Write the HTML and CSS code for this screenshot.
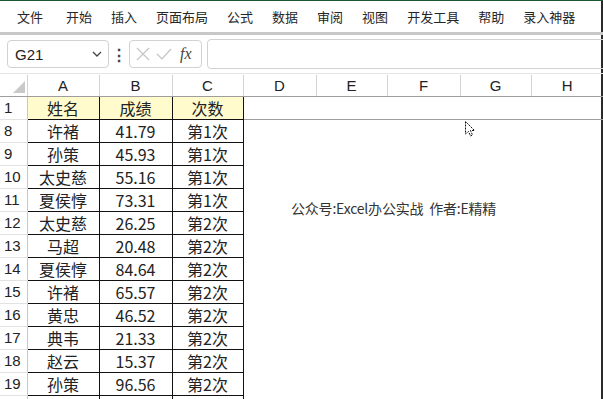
FILE: index.html
```html
<!DOCTYPE html>
<html lang="zh-CN">
<head>
    <meta charset="UTF-8">
    <title>Excel</title>
    <link rel="stylesheet" href="styles.css">
</head>
<body>
<div class="app">
    <div class="menu">
        <span class="first">文件</span>
        <span>开始</span>
        <span>插入</span>
        <span>页面布局</span>
        <span>公式</span>
        <span>数据</span>
        <span>审阅</span>
        <span>视图</span>
        <span>开发工具</span>
        <span>帮助</span>
        <span>录入神器</span>
    </div>

    <div class="formula-bar">
        <div class="name-box">
            <span>G21</span>
            <svg width="10" height="6" viewBox="0 0 10 6"><path d="M1 1 L5 5 L9 1" fill="none" stroke="#444" stroke-width="1.3"/></svg>
        </div>
        <div class="dots">⋮</div>
        <div class="fx-box">
            <svg width="14" height="14" viewBox="0 0 14 14"><path d="M1 1 L13 13 M13 1 L1 13" stroke="#c4c4c4" stroke-width="1.2"/></svg>
            <svg width="16" height="12" viewBox="0 0 16 12"><path d="M1 6 L6 11 L15 1" fill="none" stroke="#c4c4c4" stroke-width="1.2"/></svg>
            <span class="fx">fx</span>
        </div>
        <div class="formula-input"></div>
    </div>

    <table class="sheet">
        <colgroup>
            <col style="width:27px"><col style="width:72px"><col style="width:73px"><col style="width:71px">
            <col style="width:73px"><col style="width:71px"><col style="width:73px"><col style="width:71px"><col style="width:72px">
        </colgroup>
        <thead>
            <tr>
                <th class="corner"><svg width="12" height="12" viewBox="0 0 12 12"><path d="M12 0 L12 12 L0 12 Z" fill="#c9c9c9"/></svg></th>
                <th>A</th><th>B</th><th>C</th><th>D</th><th>E</th><th>F</th><th>G</th><th>H</th>
            </tr>
        </thead>
        <tbody>
            <tr class="title-row"><td class="rh">1</td><td class="c hl">姓名</td><td class="c hl">成绩</td><td class="c hl">次数</td><td></td><td></td><td></td><td></td><td></td></tr>
            <tr><td class="rh">8</td><td class="c">许褚</td><td class="c">41.79</td><td class="c">第1次</td><td></td><td></td><td></td><td></td><td></td></tr>
            <tr><td class="rh">9</td><td class="c">孙策</td><td class="c">45.93</td><td class="c">第1次</td><td></td><td></td><td></td><td></td><td></td></tr>
            <tr><td class="rh">10</td><td class="c">太史慈</td><td class="c">55.16</td><td class="c">第1次</td><td></td><td></td><td></td><td></td><td></td></tr>
            <tr><td class="rh">11</td><td class="c">夏侯惇</td><td class="c">73.31</td><td class="c">第1次</td><td></td><td></td><td></td><td></td><td></td></tr>
            <tr><td class="rh">12</td><td class="c">太史慈</td><td class="c">26.25</td><td class="c">第2次</td><td></td><td></td><td></td><td></td><td></td></tr>
            <tr><td class="rh">13</td><td class="c">马超</td><td class="c">20.48</td><td class="c">第2次</td><td></td><td></td><td></td><td></td><td></td></tr>
            <tr><td class="rh">14</td><td class="c">夏侯惇</td><td class="c">84.64</td><td class="c">第2次</td><td></td><td></td><td></td><td></td><td></td></tr>
            <tr><td class="rh">15</td><td class="c">许褚</td><td class="c">65.57</td><td class="c">第2次</td><td></td><td></td><td></td><td></td><td></td></tr>
            <tr><td class="rh">16</td><td class="c">黄忠</td><td class="c">46.52</td><td class="c">第2次</td><td></td><td></td><td></td><td></td><td></td></tr>
            <tr><td class="rh">17</td><td class="c">典韦</td><td class="c">21.33</td><td class="c">第2次</td><td></td><td></td><td></td><td></td><td></td></tr>
            <tr><td class="rh">18</td><td class="c">赵云</td><td class="c">15.37</td><td class="c">第2次</td><td></td><td></td><td></td><td></td><td></td></tr>
            <tr><td class="rh">19</td><td class="c">孙策</td><td class="c">96.56</td><td class="c">第2次</td><td></td><td></td><td></td><td></td><td></td></tr>
            <tr><td class="rh"></td><td class="c"></td><td class="c"></td><td class="c"></td><td></td><td></td><td></td><td></td><td></td></tr>
        </tbody>
    </table>

    <div class="note">公众号:Excel办公实战&nbsp;&nbsp;作者:E精精</div>

    <svg class="cursor" width="12" height="18" viewBox="0 0 12 18">
        <path d="M0.5 0.5 L0.5 13 L3.5 10.5 L5.5 15 L7.5 14 L5.5 9.5 L9.5 9.5 Z" fill="#fff" stroke="#111" stroke-width="1" stroke-dasharray="2 1"/>
    </svg>
</div>
</body>
</html>
```

FILE: styles.css
```css
html, body {
    margin: 0;
    padding: 0;
    background: #fff;
}
body {
    width: 603px;
    height: 399px;
    overflow: hidden;
    font-family: "Noto Sans CJK SC", "Noto Sans", sans-serif;
    color: #222;
}
.app {
    position: relative;
    width: 603px;
    height: 399px;
    overflow: hidden;
    border-top: 1px solid #1d5632;
    box-sizing: border-box;
    box-shadow: inset -2px 0 #2a2a2a;
}
.menu {
    display: flex;
    align-items: center;
    gap: 19px;
    height: 31px;
    padding-left: 17px;
    font-size: 13px;
    color: #262626;
    border-bottom: 3px solid #c8c8c8;
}
.menu .first {
    margin-right: 4px;
}
.formula-bar {
    display: flex;
    align-items: center;
    height: 39px;
    padding-left: 7px;
    border-bottom: 1px solid #e6e6e6;
    box-sizing: border-box;
}
.name-box {
    display: flex;
    align-items: center;
    justify-content: space-between;
    width: 102px;
    height: 28px;
    box-sizing: border-box;
    border: 1px solid #d2d2d2;
    border-radius: 4px;
    padding: 0 6px 0 7px;
    font-family: "Liberation Sans", Arial, sans-serif;
    font-size: 15px;
    color: #222;
}
.dots {
    width: 20px;
    text-align: center;
    font-size: 16px;
    font-weight: bold;
    color: #444;
}
.fx-box {
    display: flex;
    align-items: center;
    gap: 6px;
    width: 73px;
    height: 28px;
    box-sizing: border-box;
    border: 1px solid #d2d2d2;
    border-radius: 4px;
    padding: 0 4px 0 6px;
}
.fx {
    margin-left: 2px;
    font-family: "Liberation Serif", serif;
    font-style: italic;
    font-size: 16px;
    color: #444;
}
.formula-input {
    flex: 1;
    height: 28px;
    margin-left: 5px;
    margin-right: -10px;
    border: 1px solid #d2d2d2;
    border-radius: 4px;
}
.sheet {
    border-collapse: collapse;
    table-layout: fixed;
    width: 603px;
    margin-top: 1px;
    font-size: 16px;
}
.sheet th {
    height: 21px;
    padding: 0;
    font-family: "Liberation Sans", Arial, sans-serif;
    font-weight: normal;
    font-size: 15px;
    color: #222;
    border-left: 1px solid #d4d4d4;
    border-bottom: 1px solid #9e9e9e;
    text-align: center;
}
.sheet th.corner {
    border-left: none;
    text-align: right;
    vertical-align: bottom;
    line-height: 0;
}
.sheet th.corner svg {
    margin: 0 2px 3px 0;
}
.sheet td {
    height: 22px;
    padding: 0;
    line-height: 22px;
    white-space: nowrap;
}
.sheet td.rh {
    padding-left: 4px;
    font-family: "Liberation Sans", Arial, sans-serif;
    font-size: 15px;
    color: #222;
    border-right: 1px solid #c8c8c8;
    border-bottom: 1px solid #e2e2e2;
}
.sheet td.c {
    text-align: center;
    border: 1px solid #111;
}
.sheet td.hl {
    background: #fffbcc;
}
.title-row td {
    border-bottom: 1px solid #9e9e9e;
}
/* floating text box over the sheet */
.note {
    position: absolute;
    left: 291px;
    top: 197px;
    font-size: 14px;
    line-height: 20px;
    letter-spacing: -0.2px;
    color: #333;
    white-space: nowrap;
}
.cursor {
    position: absolute;
    left: 465px;
    top: 120px;
}
```
